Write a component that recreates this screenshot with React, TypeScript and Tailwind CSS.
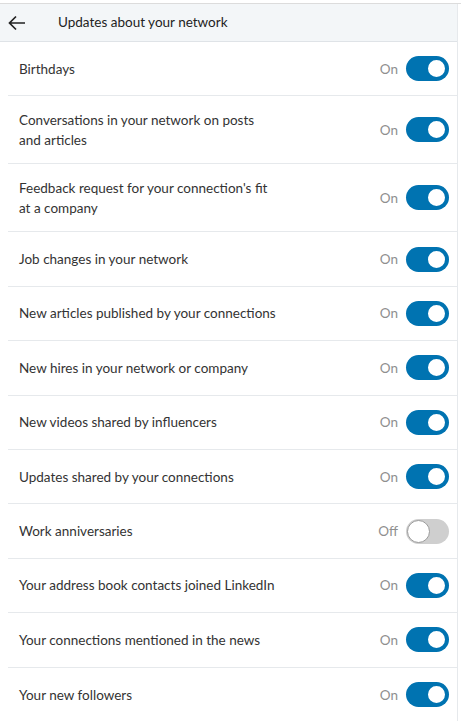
import React from "react";

const items: { lines: string[]; on: boolean }[] = [
  { lines: ["Birthdays"], on: true },
  { lines: ["Conversations in your network on posts", "and articles"], on: true },
  { lines: ["Feedback request for your connection's fit", "at a company"], on: true },
  { lines: ["Job changes in your network"], on: true },
  { lines: ["New articles published by your connections"], on: true },
  { lines: ["New hires in your network or company"], on: true },
  { lines: ["New videos shared by influencers"], on: true },
  { lines: ["Updates shared by your connections"], on: true },
  { lines: ["Work anniversaries"], on: false },
  { lines: ["Your address book contacts joined LinkedIn"], on: true },
  { lines: ["Your connections mentioned in the news"], on: true },
  { lines: ["Your new followers"], on: true },
];

function Toggle({ on }: { on: boolean }) {
  return (
    <div
      className={
        on
          ? "w-[43px] h-[25px] rounded-full bg-[#0073b1] flex items-center justify-end p-[2px]"
          : "w-[43px] h-[25px] rounded-full bg-[#cfcfcf] flex items-center justify-start p-[1px]"
      }
    >
      <div
        className={
          on
            ? "w-[21px] h-[21px] rounded-full bg-white border-2 border-[#0073b1]"
            : "w-[23px] h-[23px] rounded-full bg-white border border-[#9a9a9a]"
        }
      />
    </div>
  );
}

export default function App() {
  return (
    <div className="w-[461px] h-[721px] bg-white overflow-hidden font-['Lato',sans-serif] text-[13.5px] text-[#333]">
      <div className="h-[4px] bg-white border-b border-[#dcdcdc]" />
      <div className="w-[458px] border-r border-[#e6e9ec]">
        <div className="h-[38px] bg-[#f3f6f8] border-b border-[#dfe3e7] flex items-center">
          <div className="w-[58px] flex items-center pl-[8px]">
            <svg width="18" height="16" viewBox="0 0 18 16" fill="none">
              <path d="M17 8H2M8 1.5L1.5 8L8 14.5" stroke="#222" strokeWidth="1.7" />
            </svg>
          </div>
          <span className="text-[#222]">Updates about your network</span>
        </div>
        <div className="pl-[8px]">
          {items.map((it, i) => (
            <div
              key={it.lines[0]}
              className={
                i === items.length - 1
                  ? "flex items-center justify-between pl-[11px] pr-[8px] min-h-[54.4px]"
                  : "flex items-center justify-between pl-[11px] pr-[8px] min-h-[54.4px] border-b border-[#e6e9ec]"
              }
            >
              <div className="leading-[20px] py-[13.5px]">
                {it.lines.map((l) => (
                  <div key={l}>{l}</div>
                ))}
              </div>
              <div className="flex items-center gap-[8px]">
                <span className="text-[#8f8f8f]">{it.on ? "On" : "Off"}</span>
                <Toggle on={it.on} />
              </div>
            </div>
          ))}
        </div>
      </div>
    </div>
  );
}
